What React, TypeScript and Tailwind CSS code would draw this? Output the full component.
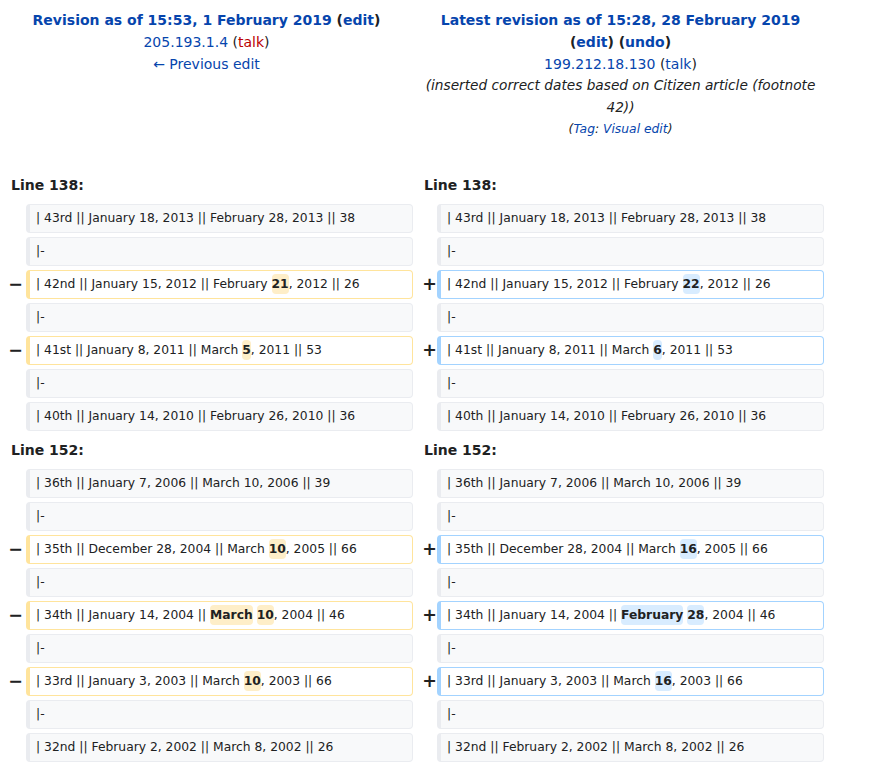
type Part = string | { t: string };
type Row =
  | { kind: "header"; left: string; right: string }
  | { kind: "context"; text: string }
  | { kind: "change"; del: Part[]; ins: Part[] };

const rows: Row[] = [
  { kind: "header", left: "Line 138:", right: "Line 138:" },
  { kind: "context", text: "| 43rd || January 18, 2013 || February 28, 2013 || 38" },
  { kind: "context", text: "|-" },
  {
    kind: "change",
    del: ["| 42nd || January 15, 2012 || February ", { t: "21" }, ", 2012 || 26"],
    ins: ["| 42nd || January 15, 2012 || February ", { t: "22" }, ", 2012 || 26"],
  },
  { kind: "context", text: "|-" },
  {
    kind: "change",
    del: ["| 41st || January 8, 2011 || March ", { t: "5" }, ", 2011 || 53"],
    ins: ["| 41st || January 8, 2011 || March ", { t: "6" }, ", 2011 || 53"],
  },
  { kind: "context", text: "|-" },
  { kind: "context", text: "| 40th || January 14, 2010 || February 26, 2010 || 36" },
  { kind: "header", left: "Line 152:", right: "Line 152:" },
  { kind: "context", text: "| 36th || January 7, 2006 || March 10, 2006 || 39" },
  { kind: "context", text: "|-" },
  {
    kind: "change",
    del: ["| 35th || December 28, 2004 || March ", { t: "10" }, ", 2005 || 66"],
    ins: ["| 35th || December 28, 2004 || March ", { t: "16" }, ", 2005 || 66"],
  },
  { kind: "context", text: "|-" },
  {
    kind: "change",
    del: ["| 34th || January 14, 2004 || ", { t: "March" }, " ", { t: "10" }, ", 2004 || 46"],
    ins: ["| 34th || January 14, 2004 || ", { t: "February" }, " ", { t: "28" }, ", 2004 || 46"],
  },
  { kind: "context", text: "|-" },
  {
    kind: "change",
    del: ["| 33rd || January 3, 2003 || March ", { t: "10" }, ", 2003 || 66"],
    ins: ["| 33rd || January 3, 2003 || March ", { t: "16" }, ", 2003 || 66"],
  },
  { kind: "context", text: "|-" },
  { kind: "context", text: "| 32nd || February 2, 2002 || March 8, 2002 || 26" },
];

const cell =
  "h-[29px] rounded-[4px] border border-l-4 px-[6px] py-[3px] text-[12.32px] leading-[21px] whitespace-nowrap overflow-hidden text-[#202122]";

function Line({ parts, added }: { parts: Part[]; added: boolean }) {
  return (
    <div className={`${cell} bg-white ${added ? "border-[#a3d3ff]" : "border-[#ffe49c]"}`}>
      {parts.map((p, i) =>
        typeof p === "string" ? (
          <span key={i}>{p}</span>
        ) : (
          <span
            key={i}
            className={`rounded-[4px] py-[3px] font-bold ${added ? "bg-[#d8ecff]" : "bg-[#feeec8]"}`}
          >
            {p.t}
          </span>
        )
      )}
    </div>
  );
}

function Context({ text }: { text: string }) {
  return <div className={`${cell} bg-[#f8f9fa] border-[#eaecf0]`}>{text}</div>;
}

const link = "text-[#0645ad]";

export default function App() {
  return (
    <div
      className="w-[874px] h-[766px] overflow-hidden bg-white text-[#202122] text-[14px] leading-[21.8px]"
      style={{ fontFamily: '"DejaVu Sans", sans-serif' }}
    >
      {/* titles */}
      <div className="flex h-[170px] pt-[10px]">
        <div className="w-[413px] text-center">
          <div className="font-bold">
            <span className={link}>Revision as of 15:53, 1 February 2019</span> (
            <span className={link}>edit</span>)
          </div>
          <div>
            <span className={link}>205.193.1.4</span> (<span className="text-[#ba0000]">talk</span>)
          </div>
          <div className={link}>← Previous edit</div>
        </div>
        <div className="w-[411px] pl-[4px] text-center">
          <div className="font-bold">
            <span className={link}>Latest revision as of 15:28, 28 February 2019</span>
          </div>
          <div className="font-bold">
            (<span className={link}>edit</span>) (<span className={link}>undo</span>)
          </div>
          <div>
            <span className={link}>199.212.18.130</span> (<span className={link}>talk</span>)
          </div>
          <div className="italic text-[13.7px]">
            (inserted correct dates based on Citizen article (footnote 42))
          </div>
          <div className="italic text-[12.32px]">
            (<span className={link}>Tag</span>: <span className={link}>Visual edit</span>)
          </div>
        </div>
      </div>

      {/* diff table */}
      <div className="grid grid-cols-[26px_387px_24px_387px] gap-y-[4px]">
        {rows.map((r, i) => {
          if (r.kind === "header") {
            return (
              <div key={i} className="contents">
                <div className="col-span-2 h-[30px] py-[4px] pl-[11px] font-bold leading-[22px]">{r.left}</div>
                <div className="col-span-2 h-[30px] py-[4px] pl-[11px] font-bold leading-[22px]">{r.right}</div>
              </div>
            );
          }
          if (r.kind === "context") {
            return (
              <div key={i} className="contents">
                <div />
                <Context text={r.text} />
                <div />
                <Context text={r.text} />
              </div>
            );
          }
          return (
            <div key={i} className="contents">
              <div className="flex items-center justify-end pr-[3px] text-[17.5px] font-bold leading-none">−</div>
              <Line parts={r.del} added={false} />
              <div className="flex items-center justify-end text-[17.5px] font-bold leading-none">+</div>
              <Line parts={r.ins} added />
            </div>
          );
        })}
      </div>
    </div>
  );
}
